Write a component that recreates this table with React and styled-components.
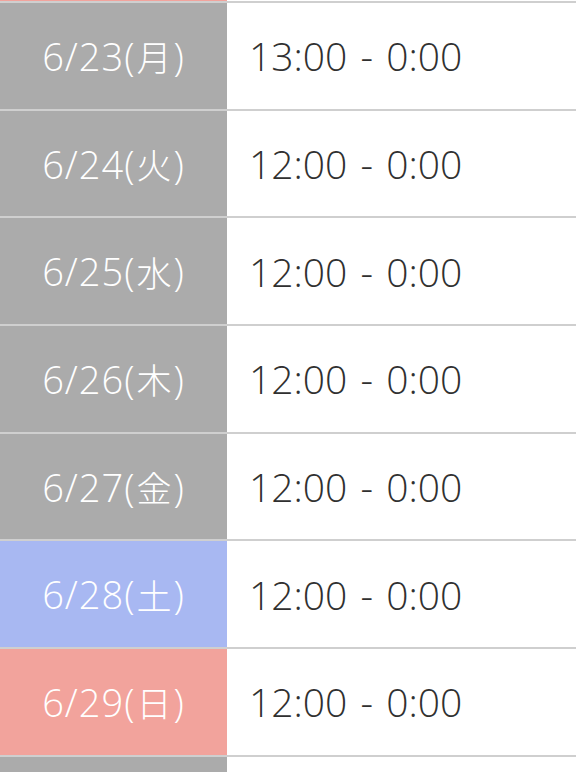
import React from "react";
import styled, { createGlobalStyle } from "styled-components";

const Global = createGlobalStyle`
  html, body { margin: 0; padding: 0; background: #ffffff; }
  body { font-family: "Open Sans", "Noto Sans CJK JP", sans-serif; overflow: hidden; }
`;

const COLORS = {
  weekday: "#ababab",
  sat: "#a8b8f2",
  sun: "#f2a39c",
};

const Schedule = styled.div`
  display: flex;
  flex-direction: column;
  width: 576px;
`;

const Row = styled.div`
  display: grid;
  grid-template-columns: 227px 1fr;
  height: ${(p) => p.$height}px;
  box-sizing: border-box;
  border-top: ${(p) => (p.$first ? "0" : "2px solid #cfcfcf")};
  overflow: hidden;
`;

const DateCell = styled.div`
  background: ${(p) => COLORS[p.$kind]};
  color: #ffffff;
  display: flex;
  align-items: center;
  justify-content: center;
  font-size: 38px;
  font-weight: 350;
  letter-spacing: 1px;
  line-height: 1;
`;

const Kanji = styled.span`
  font-family: "Noto Sans CJK JP", sans-serif;
  font-weight: 300;
  font-size: 35px;
  margin: 0 1px;
`;

const TimeCell = styled.div`
  background: #ffffff;
  color: #303030;
  display: flex;
  align-items: center;
  padding-left: 22px;
  font-size: 39px;
  font-weight: 350;
  word-spacing: 3px;
  line-height: 1;
`;

const days = [
  { md: "6/23", wd: "月", time: "13:00 - 0:00", kind: "weekday" },
  { md: "6/24", wd: "火", time: "12:00 - 0:00", kind: "weekday" },
  { md: "6/25", wd: "水", time: "12:00 - 0:00", kind: "weekday" },
  { md: "6/26", wd: "木", time: "12:00 - 0:00", kind: "weekday" },
  { md: "6/27", wd: "金", time: "12:00 - 0:00", kind: "weekday" },
  { md: "6/28", wd: "土", time: "12:00 - 0:00", kind: "sat" },
  { md: "6/29", wd: "日", time: "12:00 - 0:00", kind: "sun" },
];

export default function App() {
  return (
    <>
      <Global />
      <Schedule>
        <Row $first $height={1}>
          <DateCell $kind="sun" />
          <TimeCell />
        </Row>
        {days.map((d) => (
          <Row key={d.md} $height={107.7}>
            <DateCell $kind={d.kind}>
              {d.md}(<Kanji>{d.wd}</Kanji>)
            </DateCell>
            <TimeCell>{d.time}</TimeCell>
          </Row>
        ))}
        <Row $height={20}>
          <DateCell $kind="weekday" />
          <TimeCell />
        </Row>
      </Schedule>
    </>
  );
}
